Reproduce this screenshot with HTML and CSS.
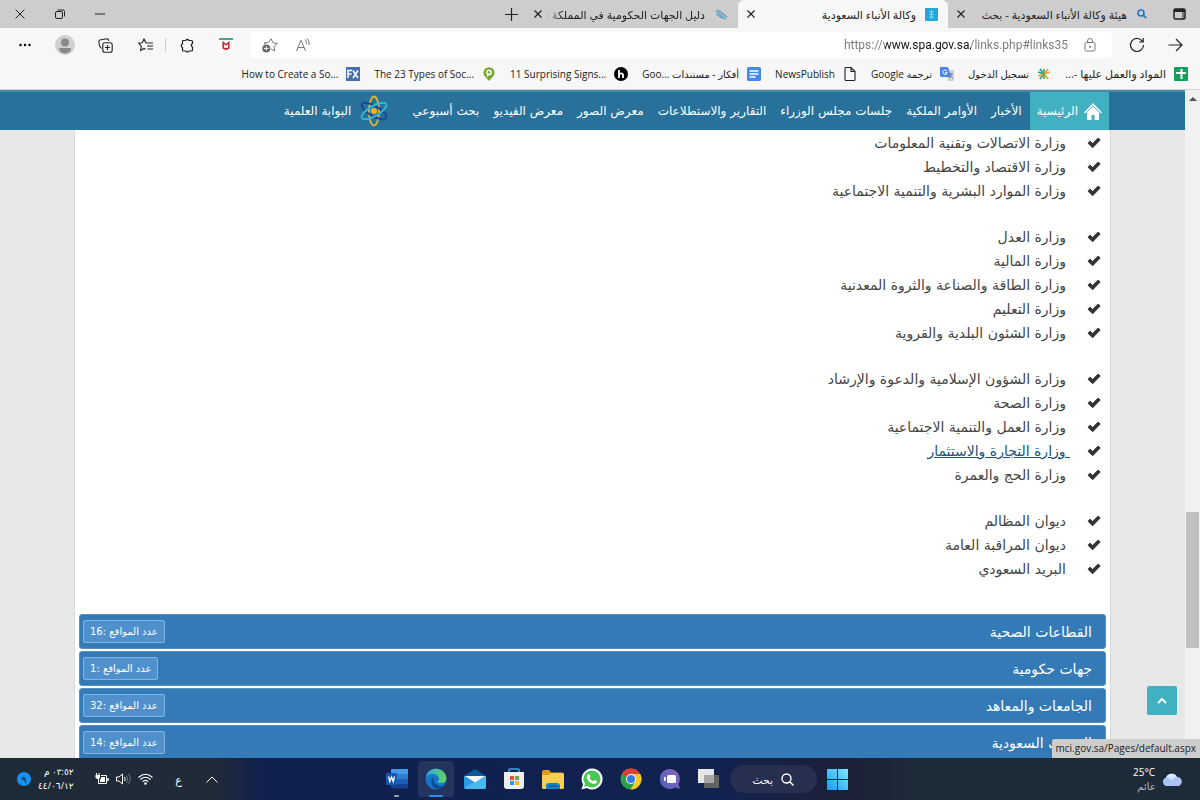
FILE: index.html
```html
<!DOCTYPE html>
<html lang="ar" dir="rtl">
  <head>
    <meta charset="UTF-8" />
    <meta name="viewport" content="width=device-width, initial-scale=1.0" />
    <title>وكالة الأنباء السعودية</title>
    <link rel="stylesheet" href="styles.css">
  </head>
  <body>
    <svg class="defs" aria-hidden="true">
      <symbol id="check" viewBox="0 0 14 12">
        <path d="M1 6.2 L3.2 4.2 L5.6 6.6 L11.2 1 L13.2 3 L5.6 10.8 Z" fill="#333" stroke="#333" stroke-width="1" stroke-linejoin="round"/>
      </symbol>
      <symbol id="close" viewBox="0 0 10 10">
        <path d="M1.5 1.5l7 7M8.5 1.5l-7 7" fill="none" stroke="#222" stroke-width="1.2"/>
      </symbol>
    </svg>

    <!-- Tabs -->
    <div class="titlebar">
      <button class="tab-menu" aria-label="علامات التبويب">
        <svg width="13" height="12" viewBox="0 0 13 12"><rect x="1" y="1" width="11" height="10" rx="1.5" fill="none" stroke="#222" stroke-width="1.5"/><path d="M1 1h11v3H1z" fill="#222"/><path d="M10 4v7" stroke="#222"/></svg>
      </button>
      <div class="tab">
        <svg width="12" height="12" viewBox="0 0 12 12"><circle cx="5" cy="5" r="3" fill="none" stroke="#1d78c8" stroke-width="1.6"/><path d="M7.2 7.2l3 3" stroke="#1d78c8" stroke-width="1.8"/></svg>
        <span class="tab-title">هيئة وكالة الأنباء السعودية - بحث</span>
        <button aria-label="إغلاق"><svg width="10" height="10"><use href="#close"/></svg></button>
      </div>
      <div class="tab active">
        <svg width="13" height="13" viewBox="0 0 13 13"><rect width="13" height="13" rx="1" fill="#22a7d6"/><path d="M6.5 2v9M4 3l2.500 2L9 3M4 6.500h5M4 10l2.500-2L9 10" stroke="#8fd6ee" fill="none"/></svg>
        <span class="tab-title">وكالة الأنباء السعودية</span>
        <button aria-label="إغلاق"><svg width="10" height="10"><use href="#close"/></svg></button>
      </div>
      <div class="tab">
        <svg width="14" height="13" viewBox="0 0 14 13"><path d="M1 1l5 1 7 6-1 4-6-2z" fill="#8cc5d6"/><path d="M2 3l9 8M4 2l9 7M2 6l6 4" stroke="#5a86b5" fill="none"/><path d="M5 4l4 4" stroke="#d8a5b5"/></svg>
        <span class="tab-title faded">دليل الجهات الحكومية في المملكة ا</span>
        <button aria-label="إغلاق"><svg width="10" height="10"><use href="#close"/></svg></button>
      </div>
      <button class="new-tab" aria-label="علامة تبويب جديدة">
        <svg width="13" height="13" viewBox="0 0 13 13"><path d="M6.500 0v13M0 6.500h13" stroke="#222" stroke-width="1.2"/></svg>
      </button>
      <div class="window-buttons">
        <button aria-label="تصغير"><svg width="10" height="10" viewBox="0 0 10 10"><path d="M0 5h10" stroke="#222"/></svg></button>
        <button aria-label="استعادة"><svg width="10" height="10" viewBox="0 0 10 10"><rect x="0.500" y="2.500" width="7" height="7" rx="1.500" fill="none" stroke="#222"/><path d="M2.500 1h5.500a1.500 1.500 0 0 1 1.500 1.500v5" fill="none" stroke="#222"/></svg></button>
        <button aria-label="إغلاق النافذة"><svg width="10" height="10" viewBox="0 0 10 10"><path d="M0.500 0.500l9 9M9.500 0.500l-9 9" stroke="#222"/></svg></button>
      </div>
    </div>

    <!-- Toolbar -->
    <div class="toolbar">
      <button aria-label="رجوع"><svg width="15" height="14" viewBox="0 0 15 14"><path d="M0.500 7h13M8 1l6 6-6 6" fill="none" stroke="#222" stroke-width="1.200"/></svg></button>
      <button class="reload" aria-label="تحديث"><svg width="16" height="16" viewBox="0 0 16 16"><path d="M13.500 4.500A6.500 6.500 0 1 0 14.500 8M14.200 1v4h-4" fill="none" stroke="#222" stroke-width="1.200"/></svg></button>
      <form class="address">
        <svg width="12" height="14" viewBox="0 0 12 14"><rect x="1" y="4.500" width="10" height="8.500" rx="1.500" fill="none" stroke="#777"/><path d="M3.500 4.500V3a2.500 2.500 0 0 1 5 0v1.500" fill="none" stroke="#777"/><circle cx="6" cy="8.700" r="1" fill="#777"/></svg>
        <input class="url" type="text" dir="ltr" aria-label="العنوان" value="https://www.spa.gov.sa/links.php#links35">
        <button type="button" aria-label="قراءة بصوت عال"><svg width="14" height="14" viewBox="0 0 14 14"><path d="M0.500 13L4.800 2.500h.4L9.500 13M2 9.500h6M9 1.500q2 1.500 1.500 4.500M11 .5q3 2.500 2 6.500" fill="none" stroke="#777"/></svg></button>
        <button type="button" aria-label="إضافة إلى المفضلة"><svg width="16" height="15" viewBox="0 0 16 15"><path d="M4 6.500L2 5l4.500-.7L9 .8l2 4 4.300.7L12 8.500l.8 4.500L9 11" fill="none" stroke="#777"/><circle cx="4.300" cy="10.500" r="4" fill="#666"/><path d="M4.300 8.300v4.400M2.100 10.500h4.400" stroke="#fff"/></svg></button>
      </form>
      <button class="ext" aria-label="McAfee"><svg width="14" height="14" viewBox="0 0 14 14"><path d="M0 2h14v12H0z" fill="#fff"/><path d="M0 0h14v2H0z" fill="#43a58c"/><path d="M4.200 4.500v5.500L7 11.300l2.800-1.300V4.500L7 6.800z" fill="none" stroke="#c4202c" stroke-width="1.500"/></svg></button>
      <button class="ext" aria-label="الملحقات"><svg width="15" height="15" viewBox="0 0 15 15"><path d="M4.500 2.500h2.300a1.600 1.600 0 0 1 3 0h2.700q1 0 1 1v2.200a1.700 1.700 0 0 0 0 3.300v3q0 1-1 1H9.800a1.600 1.600 0 0 1-3 0H4.500q-1 0-1-1V9.500a1.900 1.900 0 0 1 0-3.600V3.500q0-1 1-1z" fill="none" stroke="#222" stroke-width="1.200"/></svg></button>
      <span class="divider"></span>
      <button class="ext" aria-label="المفضلة"><svg width="15" height="14" viewBox="0 0 15 14"><path d="M9.500 5L8 4.800 6 1 4.300 4.800.8 5.300l2.500 2.900-.7 4.300L6 10.500l1.500.8M9.500 5H15M9 8h6M9.500 11H15" fill="none" stroke="#222" stroke-width="1.100"/></svg></button>
      <button class="ext" aria-label="المجموعات"><svg width="15" height="15" viewBox="0 0 15 15"><rect x="4.800" y="4.800" width="9.400" height="9.400" rx="2" fill="none" stroke="#222" stroke-width="1.100"/><path d="M9.500 7v5M7 9.500h5M3.500 10.500L1.500 8 .8 3.500Q1 2 2.500 1.800L9 .8q1.500 0 1.800 2" fill="none" stroke="#222" stroke-width="1.100"/></svg></button>
      <button class="ext" aria-label="ملف التعريف"><svg width="20" height="20" viewBox="0 0 20 20"><circle cx="10" cy="10" r="10" fill="#d2d0ce"/><circle cx="10" cy="7.500" r="4" fill="#8a8886"/><path d="M4 13h12q0 5-6 5.500Q4 18 4 13z" fill="#8a8886"/></svg></button>
      <button class="ext" aria-label="المزيد"><svg width="12" height="4" viewBox="0 0 12 4"><circle cx="1.500" cy="2" r="1.200"/><circle cx="6" cy="2" r="1.200"/><circle cx="10.500" cy="2" r="1.200"/></svg></button>
    </div>

    <div class="bookmarks">
      <a href="#">
        <svg width="14" height="14" viewBox="0 0 14 14"><rect width="14" height="14" rx="1" fill="#13a05b"/><path d="M7.500 2v10M2 6h10" stroke="#fff" stroke-width="2"/></svg>
        <span class="wide">المواد والعمل عليها -...</span>
      </a>
      <a href="#">
        <svg width="14" height="12" viewBox="0 0 14 12"><path d="M7 6L3 1M7 6L1 4M7 6l-4 5" stroke="#2fa08b" stroke-width="1.800"/><path d="M7 6l4-5M7 6l6-2M7 6l4 5M7 6l-6 2" stroke="#eda63a" stroke-width="1.800"/><path d="M7 6V1M7 6v5" stroke="#74ac46" stroke-width="1.800"/></svg>
        <span>تسجيل الدخول</span>
      </a>
      <a href="#">
        <svg width="14" height="14" viewBox="0 0 14 14"><path d="M5 3h9v11H8z" fill="#cdd0d6"/><path d="M0 0h8l3 10H1L0 9z" fill="#4986ec"/><path d="M7 4.200a2.200 2.200 0 1 0 .2 1.500H5" stroke="#fff" fill="none"/><path d="M9 7h4M11 6q0 4-2 5M10 8l3 3" stroke="#60738d" fill="none" stroke-width=".8"/></svg>
        <span>ترجمة Google</span>
      </a>
      <a href="#">
        <svg width="14" height="14" viewBox="0 0 14 14"><path d="M2 1.500Q2 .5 3 .5h5l4 4V12.500q0 1-1 1H3q-1 0-1-1zM8 .5V4.500h4" fill="none" stroke="#222" stroke-width="1.100"/></svg>
        <span>NewsPublish</span>
      </a>
      <a href="#">
        <svg width="14" height="14" viewBox="0 0 14 14"><rect width="14" height="14" rx="1.500" fill="#4a86ee"/><path d="M2.500 4h9M2.500 7h9M2.500 10h6" stroke="#fff" stroke-width="1.400"/></svg>
        <span>أفكار - مستندات ...Goo</span>
      </a>
      <a href="#">
        <svg width="14" height="14" viewBox="0 0 14 14"><circle cx="7" cy="7" r="7" fill="#000"/><path d="M5 3v8M9 11V7.500Q7.500 5.500 5.500 7" stroke="#fff" stroke-width="1.800" fill="none"/></svg>
        <span dir="ltr">11 Surprising Signs...</span>
      </a>
      <a href="#">
        <svg width="14" height="14" viewBox="0 0 14 14"><path d="M7 14L3 9.500A5.500 5.500 0 1 1 11 9.500z" fill="#76a432"/><circle cx="7" cy="5.500" r="2.200" fill="none" stroke="#fff" stroke-width="1.400"/><path d="M7 6l-2 4" stroke="#fff"/></svg>
        <span dir="ltr">The 23 Types of Soc...</span>
      </a>
      <a href="#">
        <svg width="14" height="14" viewBox="0 0 14 14"><rect width="14" height="14" fill="#456fb2"/><path d="M2 11V3.500h4M2 7h3.500M7 3.500l5 7.500M12 3.500L7 11" fill="none" stroke="#fff" stroke-width="1.600"/></svg>
        <span dir="ltr">How to Create a So...</span>
      </a>
    </div>

    <!-- Page -->
    <div class="viewport">
      <div class="scrollbar">
        <svg width="8" height="5" viewBox="0 0 8 5"><path d="M0 5l4-4 4 4z" fill="#505050"/></svg>
        <div class="thumb"></div>
      </div>
      <div class="page">
        <nav class="navbar">
          <a class="home" href="#">
            <svg width="18" height="17" viewBox="0 0 18 17"><path d="M0 9.500L9 0l9 9.500-1 1L9 2.500 1 10.500z" fill="#fff"/><path d="M3 9.500L9 3.500l6 6V17h-4.500v-5h-3v5H3z" fill="#fff"/></svg>
            الرئيسية
          </a>
          <a href="#">الأخبار</a>
          <a href="#">الأوامر الملكية</a>
          <a href="#">جلسات مجلس الوزراء</a>
          <a href="#">التقارير والاستطلاعات</a>
          <a href="#">معرض الصور</a>
          <a href="#">معرض الفيديو</a>
          <a href="#">بحث أسبوعي</a>
          <a class="science" href="#">
            <svg width="28" height="32" viewBox="0 0 28 32"><g fill="none" stroke-width="2"><ellipse cx="14" cy="16" rx="5" ry="14.500" stroke="#d0b33b"/><ellipse cx="14" cy="16" rx="5" ry="14" stroke="#1d449b" transform="rotate(-60 14 16)"/><ellipse cx="14" cy="16" rx="5" ry="14" stroke="#35b6d0" transform="rotate(60 14 16)"/></g><circle cx="14" cy="16" r="3" fill="#f0b51e"/></svg>
            البوابة العلمية
          </a>
        </nav>

        <main class="container">
          <ul class="links">
            <li><svg width="14" height="12"><use href="#check"/></svg><a href="#">وزارة الاتصالات وتقنية المعلومات</a></li>
            <li><svg width="14" height="12"><use href="#check"/></svg><a href="#">وزارة الاقتصاد والتخطيط</a></li>
            <li><svg width="14" height="12"><use href="#check"/></svg><a href="#">وزارة الموارد البشرية والتنمية الاجتماعية</a></li>
          </ul>
          <ul class="links">
            <li><svg width="14" height="12"><use href="#check"/></svg><a href="#">وزارة العدل</a></li>
            <li><svg width="14" height="12"><use href="#check"/></svg><a href="#">وزارة المالية</a></li>
            <li><svg width="14" height="12"><use href="#check"/></svg><a href="#">وزارة الطاقة والصناعة والثروة المعدنية</a></li>
            <li><svg width="14" height="12"><use href="#check"/></svg><a href="#">وزارة التعليم</a></li>
            <li><svg width="14" height="12"><use href="#check"/></svg><a href="#">وزارة الشئون البلدية والقروية</a></li>
          </ul>
          <ul class="links">
            <li><svg width="14" height="12"><use href="#check"/></svg><a href="#">وزارة الشؤون الإسلامية والدعوة والإرشاد</a></li>
            <li><svg width="14" height="12"><use href="#check"/></svg><a href="#">وزارة الصحة</a></li>
            <li><svg width="14" height="12"><use href="#check"/></svg><a href="#">وزارة العمل والتنمية الاجتماعية</a></li>
            <li><svg width="14" height="12"><use href="#check"/></svg><a class="hover" href="#">&nbsp;وزارة التجارة والاستثمار</a></li>
            <li><svg width="14" height="12"><use href="#check"/></svg><a href="#">وزارة الحج والعمرة</a></li>
          </ul>
          <ul class="links">
            <li><svg width="14" height="12"><use href="#check"/></svg><a href="#">ديوان المظالم</a></li>
            <li><svg width="14" height="12"><use href="#check"/></svg><a href="#">ديوان المراقبة العامة</a></li>
            <li><svg width="14" height="12"><use href="#check"/></svg><a href="#">البريد السعودي</a></li>
          </ul>

          <div class="panels">
            <a class="panel" href="#">القطاعات الصحية <span class="count">عدد المواقع :16</span></a>
            <a class="panel" href="#">جهات حكومية <span class="count">عدد المواقع :1</span></a>
            <a class="panel" href="#">الجامعات والمعاهد <span class="count">عدد المواقع :32</span></a>
            <a class="panel" href="#">الصحف السعودية <span class="count">عدد المواقع :14</span></a>
          </div>
        </main>

        <button class="to-top" aria-label="إلى الأعلى"><svg width="10" height="7" viewBox="0 0 10 7"><path d="M1 6l4-4 4 4" fill="none" stroke="#fff" stroke-width="2"/></svg></button>
      </div>
      <div class="status" dir="ltr">mci.gov.sa/Pages/default.aspx</div>
    </div>

    <!-- Taskbar -->
    <footer class="taskbar">
      <div class="weather">
        <svg width="22" height="14" viewBox="0 0 22 14"><path d="M5 14a4.500 4.500 0 0 1 0-8.500A6 6 0 0 1 16 5a4.600 4.600 0 0 1 1.500 9z" fill="#a9c3f3"/><path d="M5 6a6 6 0 0 1 11-1q-4 0-5 4Q8 5 5 6z" fill="#d9e5fc"/></svg>
        <div class="weather-text"><span dir="ltr">25°C</span><span class="muted">غائم</span></div>
      </div>

      <div class="apps">
        <button class="app" aria-label="ابدأ"><svg width="21" height="21" viewBox="0 0 21 21"><defs><linearGradient id="win" x1="1" y1="0" x2="0" y2="1"><stop offset="0" stop-color="#7fe9ff"/><stop offset="1" stop-color="#149cf0"/></linearGradient></defs><path d="M0 0h10v10H0zM11 0h10v10H11zM0 11h10v10H0zM11 11h10v10H11z" fill="url(#win)"/></svg></button>
        <button class="search"><svg width="13" height="13" viewBox="0 0 13 13"><circle cx="5.500" cy="5.500" r="4.500" fill="none" stroke="#fff" stroke-width="1.400"/><path d="M8.800 8.800L12.500 12.500" stroke="#fff" stroke-width="1.400"/></svg>بحث</button>
        <button class="app" aria-label="عرض المهام"><svg width="22" height="20" viewBox="0 0 22 20"><path d="M6 6h15v13H6z" fill="#626262"/><path d="M0 0h16v14H0z" fill="#e6e6e8"/><path d="M6 6h10v8H6z" fill="#a7a7a7"/></svg></button>
        <button class="app" aria-label="دردشة"><svg width="20" height="20" viewBox="0 0 20 20"><defs><linearGradient id="chat" x1="1" y1="0" x2="0" y2="1"><stop offset="0" stop-color="#8a65b8"/><stop offset="1" stop-color="#4f5fc0"/></linearGradient></defs><path d="M10 0a10 10 0 1 0 5 18.500l5 1.500-1.500-5A10 10 0 0 0 10 0z" fill="url(#chat)"/><rect x="7" y="6" width="9" height="8" rx="1.500" fill="#fff"/><path d="M4 7.500L6 9v2l-2 1.500z" fill="#fff"/></svg></button>
        <button class="app" aria-label="Chrome"><svg width="22" height="22" viewBox="0 0 22 22"><circle cx="11" cy="11" r="10.500" fill="#2c9f4b"/><path d="M11 11L1.900 5.800A10.500 10.500 0 0 1 20.100 5.800z" fill="#e34133"/><path d="M11 6h9.200A10.500 10.500 0 0 1 10.500 21.500L15.500 13z" fill="#fbc926"/><circle cx="11" cy="11" r="5" fill="#fff"/><circle cx="11" cy="11" r="4" fill="#317bea"/></svg></button>
        <button class="app" aria-label="WhatsApp"><svg width="22" height="22" viewBox="0 0 22 22"><path d="M11 .5a10.500 10.500 0 0 0-9 15.800L.5 21.500l5.300-1.400A10.500 10.500 0 1 0 11 .5z" fill="#fff"/><path d="M11 2.500a8.500 8.500 0 0 0-7 13.300l-.9 3.100 3.200-.8A8.500 8.500 0 1 0 11 2.500z" fill="#48c754"/><path d="M7.500 6q1.500-.5 2 2.500L8.500 10q1.500 2.500 3.700 3.300l1.300-1.300q3 .8 2.500 2.200-1.500 2.200-4 1.500-5-1.500-6.300-6Q5.700 7 7.500 6z" fill="#fff"/></svg></button>
        <button class="app" aria-label="مستكشف الملفات"><svg width="22" height="19" viewBox="0 0 22 19"><path d="M0 2q0-2 2-2h5l2 2.500H20q2 0 2 2V17q0 2-2 2H2q-2 0-2-2z" fill="#dc9b19"/><path d="M0 5h7l2-2h11q2 0 2 2v12q0 2-2 2H2q-2 0-2-2z" fill="#f8cf50"/><path d="M4 19v-3q0-3 3-3h8q3 0 3 3v3z" fill="#1680c8"/><path d="M7 16h8" stroke="#0c5b9a" stroke-width="1.400"/></svg></button>
        <button class="app" aria-label="Microsoft Store"><svg width="22" height="22" viewBox="0 0 22 22"><path d="M6 5V2q0-1 1-1h8q1 0 1 1v3" fill="none" stroke="#35a9df" stroke-width="1.600"/><path d="M1 4h20v14q0 3-3 3H4q-3 0-3-3z" fill="#eeeef0"/><path d="M7 8h4v4H7z" fill="#e5512c"/><path d="M12 8h4v4h-4z" fill="#74af25"/><path d="M7 13h4v4H7z" fill="#2c9be0"/><path d="M12 13h4v4h-4z" fill="#f4b521"/></svg></button>
        <button class="app" aria-label="البريد"><svg width="22" height="20" viewBox="0 0 22 20"><path d="M0 7L11 0l11 7v5H0z" fill="#0f5999"/><path d="M0 7h22v11q0 2-2 2H2q-2 0-2-2z" fill="#2a9be2"/><path d="M0 19L14 11l8-4v11q0 2-2 2H2z" fill="#46b9ef"/><path d="M1 7h20l-10 6.500z" fill="#f3f7fa"/></svg></button>
        <button class="app active" aria-label="Edge"><svg width="22" height="22" viewBox="0 0 22 22"><defs><linearGradient id="edge" x1="0" y1="0" x2="1" y2="0"><stop offset="0" stop-color="#2aa7df"/><stop offset="1" stop-color="#64d55a"/></linearGradient></defs><circle cx="11" cy="11" r="10.500" fill="#1577cc"/><path d="M.8 9A10.500 10.500 0 0 1 21.500 10q0 5-5.500 5-3.500 0-3.300-1.500 2-1.500 1-4Q11.500 5.500 7 6 3 6.500.8 9z" fill="url(#edge)"/><path d="M8.500 8.500q-3.500 3-1.500 8 2 4.500 7 4.500 4-1 6-4-4 2-8 0-4.500-3-3.500-8.500z" fill="#114b91"/></svg></button>
        <button class="app open" aria-label="Word"><svg width="22" height="20" viewBox="0 0 22 20"><path d="M5 0h17v6H5z" fill="#429ce8"/><path d="M5 5h17v5H5z" fill="#2b7cd3"/><path d="M5 10h17v5H5z" fill="#1d60bc"/><path d="M5 15h17v4.500H5z" fill="#123f8e"/><rect x="0" y="4" width="11" height="12" rx="1" fill="#1857b1"/><path d="M2.500 7.500l1.300 5 1.700-4.500 1.700 4.500 1.300-5" stroke="#fff" stroke-width="1.300" fill="none"/></svg></button>
      </div>

      <div class="tray">
        <button aria-label="الرموز المخفية"><svg width="12" height="7" viewBox="0 0 12 7"><path d="M.5 6.500l5.500-5.500 5.500 5.500" fill="none" stroke="#fff"/></svg></button>
        <button class="lang">ع</button>
        <div class="system">
          <svg width="15" height="12" viewBox="0 0 15 12"><path d="M.5 4.500Q7.500-2 14.500 4.500M2.500 6.500Q7.500 2 12.500 6.500M4.500 8.700q3-2.700 6 0" fill="none" stroke="#fff" stroke-width="1.100"/><circle cx="7.500" cy="10.500" r="1.300" fill="#fff"/></svg>
          <svg width="15" height="12" viewBox="0 0 15 12"><path d="M.5 4h2.500l3.500-3v10L3 8H.5z" fill="none" stroke="#fff"/><path d="M8.500 4q1.300 2 0 4" fill="none" stroke="#fff"/><path d="M10.500 2.500q2.500 3.500 0 7M12.500 1q3.500 5 0 10" fill="none" stroke="#71777e"/></svg>
          <svg width="14" height="12" viewBox="0 0 14 12"><path d="M1.500 0v2M4 0v2" stroke="#fff"/><path d="M.5 2h4.500v2.500L3.500 6h-1.500L.5 4.500z" fill="#fff"/><path d="M6 2.500h5.500v8h-8V6" fill="none" stroke="#fff"/><path d="M6.500 4h3.500v5H5V7z" fill="#fff"/><path d="M13 5v3" stroke="#fff" stroke-width="1.500"/></svg>
        </div>
        <div class="clock"><span>٠٣:٥٢ م</span><span>٤٤/٠٦/١٢</span></div>
        <span class="notify">٩</span>
      </div>
    </footer>
  </body>
</html>
```
FILE: styles.css
```css
* {
  margin: 0;
  padding: 0;
  box-sizing: border-box;
}

body {
  height: 100vh;
  display: flex;
  flex-direction: column;
  overflow: hidden;
  background: #f7f7f7;
  color: #222;
  font-family: "Open Sans", "DejaVu Sans", sans-serif;
  font-size: 11px;
}

a {
  color: inherit;
  text-decoration: none;
}

button {
  display: flex;
  align-items: center;
  justify-content: center;
  background: none;
  border: none;
  color: inherit;
  font: inherit;
}

svg {
  flex-shrink: 0;
}

.defs {
  position: absolute;
  width: 0;
  height: 0;
}

/* Tabs */
.titlebar {
  display: flex;
  height: 28px;
  background: #cdcdcd;
}

.tab-menu {
  width: 42px;
}

.tab {
  display: flex;
  align-items: center;
  gap: 9px;
  width: 210px;
  padding: 0 10px 0 8px;
}

.tab.active {
  background: #f7f7f7;
  border-radius: 6px 6px 0 0;
}

.tab-title {
  flex: 1;
  white-space: nowrap;
}

.faded {
  mask-image: linear-gradient(to left, #000 90%, transparent);
}

.tab button {
  margin-inline-start: -6px;
}

.new-tab {
  width: 34px;
}

.window-buttons {
  display: flex;
  margin-inline-start: auto;
}

.window-buttons button {
  width: 40px;
}

/* Toolbar */
.toolbar {
  display: flex;
  align-items: center;
  height: 34px;
  padding: 0 17px 0 5px;
}

.toolbar > button {
  width: 15px;
  margin-inline-end: 24px;
}

.toolbar > .reload {
  margin-inline-end: 17px;
}

.toolbar > .ext {
  width: 40px;
  margin: 0;
}

.address {
  flex: 1;
  display: flex;
  align-items: center;
  gap: 16px;
  height: 26px;
  padding: 0 16px 0 12px;
  margin-inline-end: 4px;
  background: #fff;
  border-radius: 4px;
}

.address button + button {
  margin-inline-start: 2px;
}

.url {
  flex: 1;
  min-width: 0;
  border: none;
  outline: none;
  background: linear-gradient(to left, #777 97px, #111 97px, #111 183px, #777 183px);
  background-clip: text;
  -webkit-text-fill-color: transparent;
  font-family: Roboto, sans-serif;
  font-size: 12px;
  text-align: right;
}

.divider {
  width: 1px;
  height: 14px;
  background: #ccc;
}

.bookmarks {
  display: flex;
  gap: 14px;
  height: 28px;
  padding: 0 12px 4px;
  border-bottom: 1px solid #ccd6dc;
  font-size: 10px;
}

.bookmarks a {
  display: flex;
  align-items: center;
  gap: 8px;
  white-space: nowrap;
}

.bookmarks .wide {
  font-size: 11px;
}

/* Page */
.viewport {
  position: relative;
  flex: 1;
  min-height: 0;
  display: flex;
  overflow: hidden;
}

.scrollbar {
  display: flex;
  flex-direction: column;
  align-items: center;
  width: 15px;
  padding-top: 6px;
  background: #f1f1f1;
}

.thumb {
  width: 13px;
  height: 20.5%;
  margin-top: 411px;
  background: #c1c1c1;
}

.page {
  position: relative;
  flex: 1;
  min-width: 0;
  background: #e8e8e8;
  font-family: "DejaVu Sans", sans-serif;
}

.navbar {
  display: flex;
  gap: 14px;
  height: 40px;
  padding: 0 76px;
  background: #27719a;
  border-top: 2px solid #4a88a6;
  color: #fff;
  font-size: 12px;
  white-space: nowrap;
}

.navbar a {
  display: flex;
  align-items: center;
}

.navbar .home {
  gap: 6px;
  padding: 0 7px;
  margin-inline-end: -6px;
  background: #41b1c1;
}

.navbar .science {
  gap: 9px;
  margin-inline-start: 10px;
}

.container {
  height: 100%;
  margin: 0 74px;
  padding: 1px 5px;
  background: #fff;
  border-left: 1px solid #d9d9d9;
  border-right: 1px solid #d9d9d9;
}

.links {
  list-style: none;
  margin-bottom: 22px;
  color: #444;
  font-size: 14px;
}

.links li {
  display: flex;
  align-items: center;
  gap: 21px;
  height: 24px;
  padding-inline-start: 4px;
}

.links .hover {
  margin-inline-start: -4px;
  color: #23527c;
  text-decoration: underline;
}

.panels {
  display: flex;
  flex-direction: column;
  gap: 2px;
  margin: 33px -1px 0;
}

.panel {
  display: flex;
  align-items: center;
  justify-content: space-between;
  height: 35px;
  padding: 0 13px 0 3px;
  background: #337ab7;
  border: 1px solid #5790bf;
  border-radius: 3px;
  color: #fff;
  font-size: 14px;
}

.count {
  padding: 0 6px;
  background: #5091cd;
  border: 1px solid #83b5e2;
  border-radius: 2px;
  font-size: 10px;
  line-height: 21px;
}

.to-top {
  position: absolute;
  right: 8px;
  bottom: 43px;
  width: 30px;
  height: 29px;
  background: #41b1c1;
  border-radius: 2px;
}

.status {
  position: absolute;
  right: 0;
  bottom: 0;
  padding: 0 4px;
  background: #cdcdcd;
  border-radius: 3px 0 0 0;
  font-size: 10px;
  line-height: 19px;
}

/* Taskbar */
.taskbar {
  display: flex;
  align-items: center;
  height: 42px;
  padding: 0 17px;
  background: linear-gradient(90deg, #1d2a38 0, #212a38 18%, #10204f 22%, #12224f 60%, #1c2038 70%, #1d2a38 76%);
  color: #fff;
}

.weather {
  display: flex;
  align-items: center;
  gap: 6px;
}

.weather-text {
  display: flex;
  flex-direction: column;
  line-height: 14px;
  font-size: 10px;
}

.muted {
  color: #b9bec6;
}

.apps {
  display: flex;
  align-items: center;
  gap: 3px;
  margin-inline-start: auto;
  margin-inline-end: 161px;
}

.app {
  position: relative;
  width: 36px;
  height: 36px;
}

.app.active {
  background: #25345c;
  border-radius: 4px;
}

.app.active::after,
.app.open::after {
  content: "";
  position: absolute;
  bottom: 0;
  width: 14px;
  height: 2px;
  background: #2d8fe0;
  border-radius: 1px;
}

.app.open::after {
  width: 5px;
  background: #9aa3b5;
}

.search {
  gap: 8px;
  width: 87px;
  height: 28px;
  background: #262f50;
  border-radius: 14px;
}

.tray {
  display: flex;
  align-items: center;
}

.lang {
  width: 12px;
  margin-inline-start: 21px;
}

.system {
  display: flex;
  gap: 7px;
  margin-inline-start: 20px;
}

.clock {
  display: flex;
  flex-direction: column;
  margin-inline-start: 21px;
  line-height: 14px;
  font-size: 9px;
}

.notify {
  width: 14px;
  height: 14px;
  margin-inline-start: 7px;
  background: #1590f5;
  border-radius: 50%;
  color: #10233d;
  font-size: 10px;
  line-height: 14px;
  text-align: center;
}
```
